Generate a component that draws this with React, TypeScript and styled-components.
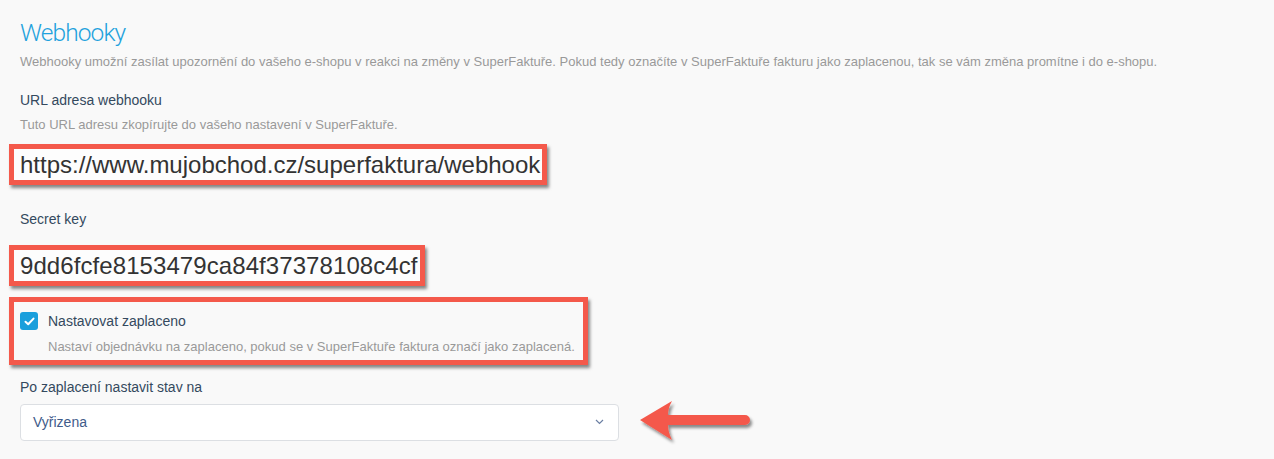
import styled, { createGlobalStyle } from "styled-components"

const GlobalStyle = createGlobalStyle`
    body {
        margin: 0;
        background: #f9f9f9;
        font-family: "Liberation Sans", Arial, sans-serif;
    }
`

const Page = styled.div`
    padding: 18px 20px 0 20px;
    height: 459px;
    box-sizing: border-box;
    overflow: hidden;
`

const Title = styled.h2`
    margin: 0;
    font-family: Roboto, "Liberation Sans", sans-serif;
    font-size: 24.5px;
    line-height: 30px;
    font-weight: 300;
    color: #1fa2dd;
    letter-spacing: -0.9px;
`

const Hint = styled.p<{ $top?: number }>`
    margin: ${(p) => p.$top ?? 0}px 0 0 0;
    font-size: 13px;
    line-height: 16px;
    color: #999;
`

const Label = styled.div<{ $top: number }>`
    margin-top: ${(p) => p.$top}px;
    font-size: 14px;
    line-height: 18px;
    color: #34495e;
`

const Callout = styled.div<{ $top: number }>`
    display: inline-block;
    margin: ${(p) => p.$top}px 0 0 -11px;
    border: 5px solid #f4594b;
    box-shadow: 2px 3px 3px rgba(40, 40, 40, 0.55);
    background: #fdfdfd;
`

const BigValue = styled.div<{ $spacing?: number }>`
    padding: 0 2px 0 6px;
    font-size: 24px;
    line-height: 31px;
    color: #333;
    letter-spacing: ${(p) => p.$spacing ?? 0}px;
`

const CheckBlock = styled.div`
    height: 58px;
    box-sizing: border-box;
    padding: 10px 8px 0 6px;
    background: #f9f9f9;
`

const CheckRow = styled.div`
    display: flex;
    align-items: center;
    gap: 10px;
`

const Box = styled.span`
    width: 18px;
    height: 18px;
    border-radius: 3px;
    background: #1a9fdc;
    display: flex;
    align-items: center;
    justify-content: center;
`

const CheckLabel = styled.span`
    font-size: 14px;
    color: #34495e;
`

const CheckHint = styled.div`
    margin: 9px 0 0 28px;
    font-size: 13px;
    color: #999;
`

const SelectRow = styled.div`
    display: flex;
    align-items: center;
    gap: 18px;
    margin-top: 2px;
`

const Select = styled.div`
    width: 599px;
    height: 37px;
    box-sizing: border-box;
    border: 1px solid #dcdfe3;
    border-radius: 4px;
    background: #fff;
    display: flex;
    align-items: center;
    justify-content: space-between;
    padding: 0 14px 0 12px;
    font-size: 14px;
    color: #3f5b8a;
`

export default function App() {
    return (
        <Page>
            <GlobalStyle />
            <Title>Webhooky</Title>
            <Hint $top={6}>
                Webhooky umožní zasílat upozornění do vašeho e-shopu v reakci na změny v SuperFaktuře. Pokud tedy označíte v SuperFaktuře fakturu jako zaplacenou, tak se vám změna promítne i do e-shopu.
            </Hint>
            <Label $top={21}>URL adresa webhooku</Label>
            <Hint $top={8}>Tuto URL adresu zkopírujte do vašeho nastavení v SuperFaktuře.</Hint>
            <div>
                <Callout $top={11}>
                    <BigValue>https://www.mujobchod.cz/superfaktura/webhook</BigValue>
                </Callout>
            </div>
            <Label $top={25}>Secret key</Label>
            <div>
                <Callout $top={17}>
                    <BigValue $spacing={0.08}>9dd6fcfe8153479ca84f37378108c4cf</BigValue>
                </Callout>
            </div>
            <div>
                <Callout $top={11}>
                    <CheckBlock>
                        <CheckRow>
                            <Box>
                                <svg width="11" height="9" viewBox="0 0 11 9">
                                    <path d="M1.5 4.8 L4.2 7.3 L9.5 1.6" fill="none" stroke="#fff" strokeWidth="2" strokeLinecap="round" strokeLinejoin="round" />
                                </svg>
                            </Box>
                            <CheckLabel>Nastavovat zaplaceno</CheckLabel>
                        </CheckRow>
                        <CheckHint>Nastaví objednávku na zaplaceno, pokud se v SuperFaktuře faktura označí jako zaplacená.</CheckHint>
                    </CheckBlock>
                </Callout>
            </div>
            <Label $top={13}>Po zaplacení nastavit stav na</Label>
            <SelectRow>
                <Select>
                    <span>Vyřizena</span>
                    <svg width="9" height="6" viewBox="0 0 9 6">
                        <path d="M1 1 L4.5 4.5 L8 1" fill="none" stroke="#6b7fa3" strokeWidth="1.2" />
                    </svg>
                </Select>
                <svg width="120" height="48" viewBox="0 0 120 48">
                    <defs>
                        <filter id="sh" x="-10%" y="-20%" width="130%" height="150%">
                            <feDropShadow dx="2" dy="3" stdDeviation="1.6" floodColor="#000" floodOpacity="0.45" />
                        </filter>
                    </defs>
                    <path
                        d="M3 22 L35 3 Q31 10 31 17 L108 17 A5 5 0 0 1 108 27 L31 27 Q31 34 35 42 Z"
                        fill="#f4594b"
                        filter="url(#sh)"
                    />
                </svg>
            </SelectRow>
        </Page>
    )
}
